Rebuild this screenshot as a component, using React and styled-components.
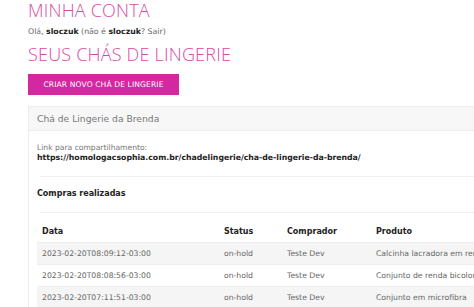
import React from "react";
import styled, { createGlobalStyle } from "styled-components";

const ORDERS = [
  { date: "2023-02-20T08:09:12-03:00", status: "on-hold", buyer: "Teste Dev", product: "Calcinha lacradora em renda" },
  { date: "2023-02-20T08:08:56-03:00", status: "on-hold", buyer: "Teste Dev", product: "Conjunto de renda bicolor" },
  { date: "2023-02-20T07:11:51-03:00", status: "on-hold", buyer: "Teste Dev", product: "Conjunto em microfibra" },
];

const App = () => (
  <Page>
    <GlobalStyle />
    <Title>MINHA CONTA</Title>
    <Greeting>
      Olá, <b>sloczuk</b> (não é <b>sloczuk</b>? Sair)
    </Greeting>
    <SectionTitle>SEUS CHÁS DE LINGERIE</SectionTitle>
    <PrimaryButton>CRIAR NOVO CHÁ DE LINGERIE</PrimaryButton>
    <Card>
      <CardHeader>Chá de Lingerie da Brenda</CardHeader>
      <CardBody>
        <LinkLabel>Link para compartilhamento:</LinkLabel>
        <LinkUrl>https://homologacsophia.com.br/chadelingerie/cha-de-lingerie-da-brenda/</LinkUrl>
        <Divider />
        <SubTitle>Compras realizadas</SubTitle>
        <Divider />
        <Table>
          <HeadRow>
            <span>Data</span>
            <span>Status</span>
            <span>Comprador</span>
            <span>Produto</span>
          </HeadRow>
          {ORDERS.map((o, i) => (
            <Row key={o.date} striped={i % 2 === 0}>
              <span>{o.date}</span>
              <span>{o.status}</span>
              <span>{o.buyer}</span>
              <span>{o.product}</span>
            </Row>
          ))}
        </Table>
      </CardBody>
    </Card>
  </Page>
);

const PINK = "#d64aa6";

const GlobalStyle = createGlobalStyle`
  html, body {
    margin: 0;
    background: #fff;
    overflow: hidden;
  }
  body {
    font-family: "DejaVu Sans", "Open Sans", sans-serif;
    color: #555;
  }
`;

const Page = styled.div`
  display: flex;
  flex-direction: column;
  align-items: flex-start;
  padding-left: 28px;
  width: 560px;
`;

const Title = styled.h1`
  margin: 0;
  font-family: "Open Sans", sans-serif;
  font-weight: 300;
  font-size: 18px;
  line-height: 20px;
  letter-spacing: 0.2px;
  color: ${PINK};
`;

const Greeting = styled.p`
  margin: 5px 0 0;
  font-size: 7.8px;
  line-height: 14px;
  color: #666;

  b {
    color: #222;
  }
`;

const SectionTitle = styled(Title).attrs({ as: "h2" })`
  margin-top: 5px;
`;

const PrimaryButton = styled.button`
  margin-top: 10px;
  height: 21px;
  width: 151px;
  padding: 0;
  border: none;
  background: #d3289f;
  color: #fff;
  font-family: "DejaVu Sans", sans-serif;
  font-size: 7.6px;
  letter-spacing: 0.1px;
`;

const Card = styled.section`
  margin-top: 11px;
  width: 530px;
  border: 1px solid #ececec;
  border-right: none;
`;

const CardHeader = styled.div`
  height: 23px;
  display: flex;
  align-items: center;
  padding-left: 8px;
  background: #f7f7f7;
  border-bottom: 1px solid #eee;
  font-size: 9.2px;
  color: #777;
`;

const CardBody = styled.div`
  padding: 12px 0 0 8px;
`;

const LinkLabel = styled.div`
  font-size: 7.6px;
  line-height: 10px;
  color: #777;
`;

const LinkUrl = styled.div`
  font-size: 7.75px;
  line-height: 10px;
  font-weight: bold;
  color: #222;
`;

const Divider = styled.hr`
  margin: 13px 0 0 3px;
  border: none;
  border-top: 1px solid #f1f1f1;
`;

const SubTitle = styled.div`
  margin-top: 12px;
  font-size: 8px;
  line-height: 10px;
  font-weight: bold;
  color: #222;
`;

const Table = styled.div`
  margin-top: 7px;
  display: flex;
  flex-direction: column;
`;

const RowBase = styled.div`
  display: grid;
  grid-template-columns: 182px 63px 89px 1fr;
  align-items: center;
  white-space: nowrap;

  span {
    padding-left: 5px;
  }
`;

const HeadRow = styled(RowBase)`
  height: 22px;
  font-size: 8px;
  font-weight: bold;
  color: #222;
`;

const Row = styled(RowBase)`
  height: 21px;
  font-size: 7.7px;
  color: #666;
  background: ${props => (props.striped ? "#f5f5f5" : "#fff")};
  border-top: 1px solid #eee;
`;

export default App;
